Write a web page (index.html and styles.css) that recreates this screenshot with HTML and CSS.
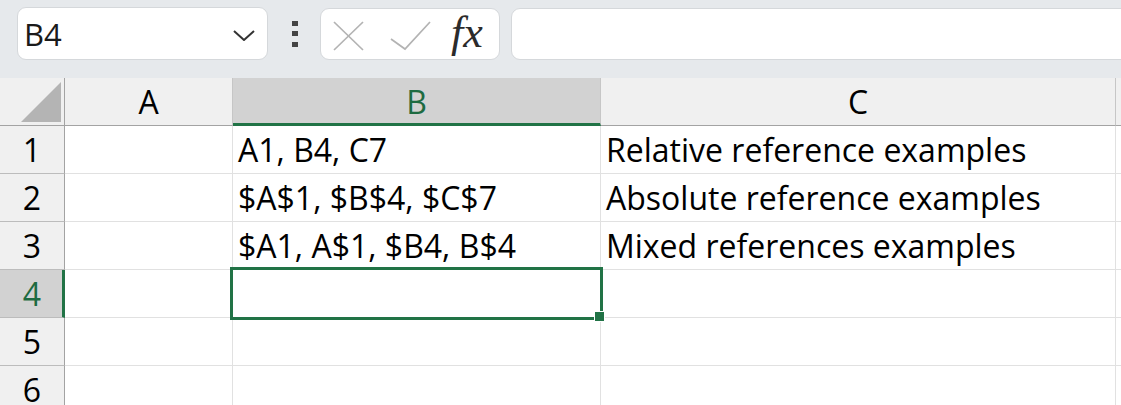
FILE: index.html
```html
<!DOCTYPE html>
<html lang="en">
<head>
    <meta charset="UTF-8">
    <title>Cell references</title>
    <link rel="stylesheet" href="styles.css">
</head>
<body>
    <div class="toolbar">
        <div class="name-box">
            <span class="name-value">B4</span>
            <svg class="chevron" width="22" height="11" viewBox="0 0 22 11">
                <polyline points="1,1 11,10 21,1" fill="none" stroke="#333" stroke-width="2"/>
            </svg>
        </div>
        <svg class="grip" width="6" height="26" viewBox="0 0 6 26">
            <rect x="0" y="0" width="6" height="5" fill="#444"/>
            <rect x="0" y="10" width="6" height="5" fill="#444"/>
            <rect x="0" y="21" width="6" height="5" fill="#444"/>
        </svg>
        <div class="fx-buttons">
            <svg class="icon-cancel" width="31" height="30" viewBox="0 0 31 30">
                <line x1="1" y1="1" x2="30" y2="29" stroke="#b3b3b3" stroke-width="1.7"/>
                <line x1="30" y1="1" x2="1" y2="29" stroke="#b3b3b3" stroke-width="1.7"/>
            </svg>
            <svg class="icon-enter" width="41" height="30" viewBox="0 0 41 30">
                <polyline points="1,18 15,28 40,1" fill="none" stroke="#b3b3b3" stroke-width="1.7"/>
            </svg>
            <span class="fx">fx</span>
        </div>
        <div class="formula-input"></div>
    </div>

    <div class="sheet">
        <div class="corner"><span class="corner-mark"></span></div>
        <div class="col-head">A</div>
        <div class="col-head active">B</div>
        <div class="col-head">C</div>
        <div class="col-head"></div>

        <div class="row-head">1</div>
        <div class="cell"></div>
        <div class="cell">A1, B4, C7</div>
        <div class="cell">Relative reference examples</div>
        <div class="cell"></div>

        <div class="row-head">2</div>
        <div class="cell"></div>
        <div class="cell">$A$1, $B$4, $C$7</div>
        <div class="cell">Absolute reference examples</div>
        <div class="cell"></div>

        <div class="row-head">3</div>
        <div class="cell"></div>
        <div class="cell">$A1, A$1, $B4, B$4</div>
        <div class="cell">Mixed references examples</div>
        <div class="cell"></div>

        <div class="row-head active">4</div>
        <div class="cell"></div>
        <div class="cell selected"></div>
        <div class="cell"></div>
        <div class="cell"></div>

        <div class="row-head">5</div>
        <div class="cell"></div>
        <div class="cell"></div>
        <div class="cell"></div>
        <div class="cell"></div>

        <div class="row-head">6</div>
        <div class="cell"></div>
        <div class="cell"></div>
        <div class="cell"></div>
        <div class="cell"></div>
    </div>
</body>
</html>
```

FILE: styles.css
```css
body {
    margin: 0;
    width: 1121px;
    height: 405px;
    overflow: hidden;
    font-family: "Open Sans", "Noto Sans", sans-serif;
    color: #000;
    background-color: #fff;
}
.toolbar {
    display: flex;
    align-items: flex-start;
    height: 78px;
    box-sizing: border-box;
    padding: 7px 0 0 17px;
    background-color: #e6e9ec;
}
.name-box {
    display: flex;
    align-items: center;
    justify-content: space-between;
    width: 251px;
    height: 53px;
    box-sizing: border-box;
    padding: 0 12px 0 6px;
    background-color: #fff;
    border: 1px solid #d5d8db;
    border-radius: 9px;
}
.name-value {
    font-size: 31px;
    color: #1a1a1a;
}
.chevron {
    margin-top: 3px;
}
.grip {
    margin: 14px 0 0 24px;
}
.fx-buttons {
    display: flex;
    align-items: center;
    width: 180px;
    height: 52px;
    box-sizing: border-box;
    margin: 1px 0 0 22px;
    padding-left: 12px;
    background-color: #fff;
    border: 1px solid #d5d8db;
    border-radius: 9px;
}
.icon-cancel {
    margin-top: 3px;
}
.icon-enter {
    margin: 3px 0 0 26px;
}
.fx {
    margin: 0 0 2px 20px;
    font-family: "Liberation Serif", serif;
    font-style: italic;
    font-size: 44px;
    line-height: 1;
    color: #2b2b2b;
}
.formula-input {
    flex: 1;
    height: 52px;
    box-sizing: border-box;
    margin: 1px -20px 0 11px;
    background-color: #fff;
    border: 1px solid #d5d8db;
    border-radius: 9px;
}
.sheet {
    display: grid;
    grid-template-columns: 65px 168px 368px 515px 1fr;
    grid-auto-rows: 48px;
    font-size: 32px;
}
.sheet > div {
    box-sizing: border-box;
    border-right: 1px solid #e1e1e1;
    border-bottom: 1px solid #e1e1e1;
    line-height: 47px;
    white-space: nowrap;
}
.sheet > .corner,
.sheet > .col-head {
    background-color: #f0f0f0;
    border-right-color: #c6c6c6;
    border-bottom-color: #a3a3a3;
    text-align: center;
}
.sheet > .corner {
    position: relative;
    border-right-color: #a3a3a3;
}
.corner-mark {
    position: absolute;
    right: 3px;
    bottom: 3px;
    width: 0;
    height: 0;
    border-left: 40px solid transparent;
    border-bottom: 40px solid #b4b4b4;
}
.sheet > .col-head.active {
    background-color: #d2d2d2;
    border-bottom: 3px solid #217346;
    color: #1e6b41;
}
.sheet > .row-head {
    background-color: #f0f0f0;
    border-right-color: #a3a3a3;
    border-bottom-color: #bcbcbc;
    text-align: center;
}
.sheet > .row-head.active {
    background-color: #d2d2d2;
    border-right: 3px solid #217346;
    color: #1e6b41;
    padding-left: 2px;
}
.sheet > .cell {
    padding-left: 5px;
}
.sheet > .selected {
    position: relative;
}
.selected::after {
    content: "";
    position: absolute;
    top: -3px;
    left: -3px;
    right: -3px;
    bottom: -3px;
    border: 3px solid #217346;
    z-index: 1;
}
.selected::before {
    content: "";
    position: absolute;
    right: -5px;
    bottom: -5px;
    width: 9px;
    height: 9px;
    background-color: #217346;
    border: 1px solid #fff;
    z-index: 2;
}
```
